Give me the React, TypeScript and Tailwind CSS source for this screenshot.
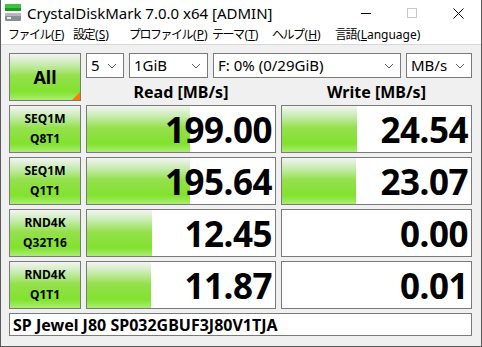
import React from "react";

const GREEN =
  "bg-[linear-gradient(to_bottom,#f4f4f4_0%,#c8ecb2_22%,#94e04c_48%,#82e22e_82%,#aaee74_100%)]";

const rows = [
  { l1: "SEQ1M", l2: "Q8T1", r: "199.00", rw: 103, w: "24.54", ww: 75 },
  { l1: "SEQ1M", l2: "Q1T1", r: "195.64", rw: 103, w: "23.07", ww: 74 },
  { l1: "RND4K", l2: "Q32T16", r: "12.45", rw: 65, w: "0.00", ww: 0 },
  { l1: "RND4K", l2: "Q1T1", r: "11.87", rw: 64, w: "0.01", ww: 0 },
];

function Chevron() {
  return (
    <svg width="10" height="6" viewBox="0 0 10 6" className="shrink-0">
      <polyline points="1,1 5,5 9,1" fill="none" stroke="#606060" strokeWidth="1" />
    </svg>
  );
}

function Select({ text, w }: { text: string; w: string }) {
  return (
    <div className={`${w} h-full bg-white border border-[#7a7a7a] flex items-center justify-between pl-[4px] pr-[6px] text-[15px] text-black`}>
      <span className="whitespace-nowrap">{text}</span>
      <Chevron />
    </div>
  );
}

function Tile({ value, bar }: { value: string; bar: number }) {
  return (
    <div className="relative bg-white border border-[#7a7a7a] flex items-center justify-end pr-[3px]">
      {bar > 0 && (
        <div className={`absolute left-0 top-0 bottom-0 ${GREEN}`} style={{ width: bar }} />
      )}
      <span className="relative font-bold text-[35px] leading-none text-black tracking-[-0.5px]">{value}</span>
    </div>
  );
}

function MenuItem({ jp, key1, rest, w }: { jp: string; key1: string; rest?: string; w: string }) {
  return (
    <span className={`${w} whitespace-nowrap`}>
      <span className="tracking-[-1.5px]">{jp}</span>
      <span className="ml-[1px]">(</span>
      <u>{key1}</u>
      {rest}
      <span>)</span>
    </span>
  );
}

export default function App() {
  return (
    <div className="w-[482px] h-[347px] bg-[#f0f0f0] flex flex-col font-['Noto_Sans','Noto_Sans_CJK_JP',sans-serif] text-black overflow-hidden border-x border-b border-[#5a5a5a]">
      {/* title bar */}
      <div className="h-[26px] bg-white flex items-center shrink-0">
        <svg width="20" height="20" viewBox="0 0 20 20" className="ml-[3px] mr-[3px]">
          <rect x="1" y="1" width="16" height="4" fill="#3cc43c" />
          <rect x="1" y="5" width="16" height="3" fill="#1e9a1e" />
          <rect x="1" y="10" width="16" height="8" rx="1" fill="#8a8f94" />
          <rect x="1" y="10" width="16" height="3" fill="#b4b8bc" />
          <rect x="3" y="14" width="4" height="2" fill="#e8f0e8" />
        </svg>
        <span className="text-[15px] leading-none whitespace-nowrap">CrystalDiskMark 7.0.0 x64 [ADMIN]</span>
        <div className="flex-1" />
        <div className="w-[46px] flex justify-center">
          <div className="w-[10px] h-[1px] bg-black" />
        </div>
        <div className="w-[46px] flex justify-center">
          <div className="w-[10px] h-[10px] border border-[#c8c8c8]" />
        </div>
        <div className="w-[46px] flex justify-center">
          <svg width="11" height="11" viewBox="0 0 11 11">
            <path d="M0.5 0.5 L10.5 10.5 M10.5 0.5 L0.5 10.5" stroke="#000" strokeWidth="1" />
          </svg>
        </div>
      </div>
      {/* menu bar */}
      <div className="h-[19px] bg-white flex items-center text-[12px] leading-none shrink-0 border-b border-[#d8d8d8]">
        <span className="w-[7px]" />
        <MenuItem jp="ファイル" key1="F" w="w-[65px]" />
        <MenuItem jp="設定" key1="S" w="w-[56px]" />
        <MenuItem jp="プロファイル" key1="P" w="w-[83px]" />
        <MenuItem jp="テーマ" key1="T" w="w-[60px]" />
        <MenuItem jp="ヘルプ" key1="H" w="w-[63px]" />
        <MenuItem jp="言語" key1="L" rest="anguage" w="w-[100px]" />
      </div>
      {/* content */}
      <div className="pt-[8px] pl-[8px] grid grid-cols-[72px_190px_191px] grid-rows-[25px_19px_48px_48px_48px_48px_23px] gap-x-[5px] gap-y-[4px]">
        <div className={`row-span-2 relative border border-[#7a7a7a] ${GREEN} flex items-center justify-center`}>
          <span className="font-bold text-[18px] leading-none">All</span>
          <div className="absolute right-0 bottom-0 w-0 h-0 border-l-[8px] border-l-transparent border-b-[8px] border-b-[#ff7a00]" />
        </div>
        <div className="col-span-2 flex gap-[5px]">
          <Select text="5" w="w-[38px]" />
          <Select text="1GiB" w="w-[79px]" />
          <Select text="F: 0% (0/29GiB)" w="w-[188px]" />
          <Select text="MB/s" w="w-[66px]" />
        </div>
        <div className="flex items-end justify-center font-bold text-[16px] leading-none pb-[1px]">Read [MB/s]</div>
        <div className="flex items-end justify-center font-bold text-[16px] leading-none pb-[1px]">Write [MB/s]</div>
        {rows.map((r, i) => (
          <React.Fragment key={i}>
            <div className={`border border-[#7a7a7a] ${GREEN} flex flex-col items-center justify-center font-bold text-[12px] leading-[20px]`}>
              <span>{r.l1}</span>
              <span>{r.l2}</span>
            </div>
            <Tile value={r.r} bar={r.rw} />
            <Tile value={r.w} bar={r.ww} />
          </React.Fragment>
        ))}
        <div className="col-span-3 bg-white border border-[#7a7a7a] flex items-center pl-[3px] font-bold text-[16px] leading-none whitespace-nowrap">
          SP Jewel J80 SP032GBUF3J80V1TJA
        </div>
      </div>
    </div>
  );
}
